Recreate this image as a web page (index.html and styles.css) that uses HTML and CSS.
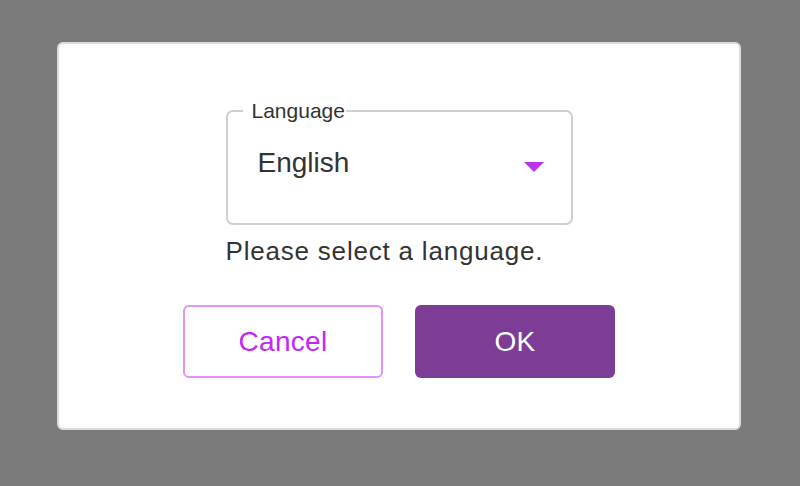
FILE: index.html
```html
<!DOCTYPE html>
<html lang="en">
<head>
<meta charset="utf-8">
<title>Language</title>
<link rel="stylesheet" href="styles.css">
</head>
<body>
<div class="dialog">
  <div class="field-group">
    <fieldset class="select-field">
      <legend class="select-label">Language</legend>
      <div class="select-row">
        <span class="select-value">English</span>
        <svg class="select-arrow" width="20" height="10" viewBox="0 0 20 10"><path d="M0 0 H20 L10 10 Z" fill="#bb33ee"/></svg>
      </div>
    </fieldset>
    <div class="helper">Please select a language.</div>
  </div>
  <div class="actions">
    <button class="btn btn-cancel">Cancel</button>
    <button class="btn btn-ok">OK</button>
  </div>
</div>
</body>
</html>
```
FILE: styles.css
```css
html, body {
  margin: 0;
  padding: 0;
}
body {
  background: #7b7b7b;
  padding-top: 42px;
  height: 486px;
  box-sizing: border-box;
  font-family: "Liberation Sans", Arial, sans-serif;
  color: #333333;
}
.dialog {
  box-sizing: border-box;
  margin-left: 57px;
  width: 684px;
  height: 388px;
  background: #ffffff;
  border: 2px solid #dcdcdc;
  border-radius: 6px;
  display: flex;
  flex-direction: column;
  align-items: center;
  padding-top: 58px;
}
.field-group {
  width: 347px;
}
.select-field {
  box-sizing: border-box;
  width: 347px;
  margin: 0;
  padding: 0;
  border: 2px solid #cfcfcf;
  border-radius: 7px;
}
.select-label {
  margin-left: 15px;
  padding: 0 1px 0 9px;
  font-size: 21px;
  line-height: 18px;
  color: #333333;
}
.select-row {
  height: 86px;
  padding: 0 27px 17px 30px;
  display: flex;
  align-items: center;
  justify-content: space-between;
}
.select-value {
  font-size: 28px;
  line-height: 32px;
  color: #333333;
}
.select-arrow {
  display: block;
  margin-top: 8px;
}
.helper {
  margin-top: 11px;
  font-size: 26px;
  line-height: 30px;
  letter-spacing: 0.8px;
  color: #333333;
}
.actions {
  margin-top: 39px;
  display: flex;
  gap: 32px;
}
.btn {
  box-sizing: border-box;
  width: 200px;
  height: 73px;
  border-radius: 6px;
  font-family: "Liberation Sans", Arial, sans-serif;
  font-size: 28px;
  letter-spacing: 0.3px;
  display: flex;
  align-items: center;
  justify-content: center;
  padding: 0;
}
.btn-cancel {
  background: #ffffff;
  border: 2px solid #e392fd;
  color: #c326f7;
}
.btn-ok {
  background: #7d3c96;
  border: none;
  color: #ffffff;
}
```
